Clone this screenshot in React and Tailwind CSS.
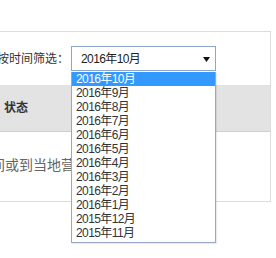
import React from "react";

const months = [
  "2016年10月",
  "2016年9月",
  "2016年8月",
  "2016年7月",
  "2016年6月",
  "2016年5月",
  "2016年4月",
  "2016年3月",
  "2016年2月",
  "2016年1月",
  "2015年12月",
  "2015年11月",
];

export default function App() {
  return (
    <div className="relative h-[258px] w-[276px] overflow-hidden bg-white pt-[31px] font-['Liberation_Sans','Noto_Sans_CJK_SC',sans-serif] text-[#333]">
      <div className="-ml-px w-[272px] border border-[#dcdcdc]">
        <div className="flex h-[53px] items-center">
          <span className="ml-[-3px] w-[74px] whitespace-nowrap text-[12px]">按时间筛选：</span>
          <div className="flex h-[25px] w-[145px] items-center justify-between border border-[#8ea6d2] pl-[9px] pr-[5px] text-[12px] tracking-[-0.6px] text-[#222]">
            <span>2016年10月</span>
            <svg width="7" height="5" viewBox="0 0 7 5" className="mt-px">
              <path d="M0 0h7L3.5 5z" fill="#111" />
            </svg>
          </div>
        </div>
        <div className="flex h-[47px] items-center border-b border-[#cfcfcf] bg-[#e3e3e3] pl-[4px] text-[12px] font-bold">
          状态
        </div>
        <div className="flex h-[69px] items-center pb-[3px]">
          <span className="ml-[-9px] whitespace-nowrap text-[14px] text-[#666]">间或到当地营业厅查询</span>
        </div>
      </div>

      <ul className="absolute left-[71px] top-[72px] w-[145px] border border-t-0 border-[#97a9c9] bg-white pb-[2px] shadow-[1px_1px_1px_rgba(0,0,0,0.08)]">
        {months.map((m, i) => (
          <li
            key={m}
            className={
              i === 0
                ? "flex h-[14px] items-center bg-[#3399ff] pl-[4px] text-[12px] leading-none tracking-[-0.6px] text-white"
                : "flex h-[14px] items-center pl-[4px] text-[12px] leading-none tracking-[-0.6px] text-[#333]"
            }
          >
            {m}
          </li>
        ))}
      </ul>
    </div>
  );
}
